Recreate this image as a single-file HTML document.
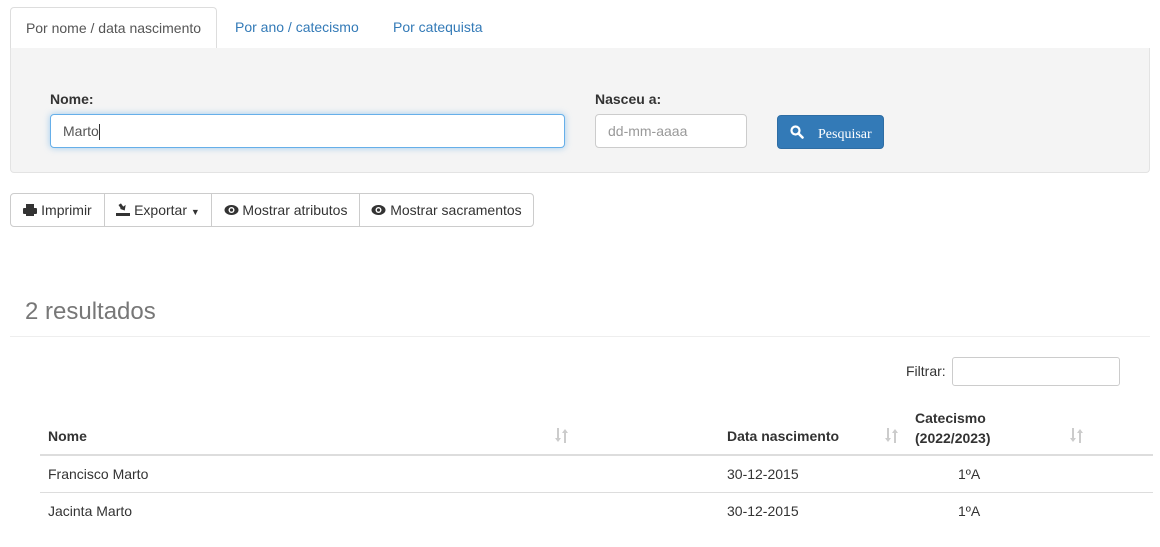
<!DOCTYPE html>
<html><head><meta charset="utf-8"><style>
*{box-sizing:border-box}
body{margin:0;width:1160px;height:547px;background:#fff;font-family:"Liberation Sans",Arial,sans-serif;font-size:14px;color:#333;position:relative;overflow:hidden}
.a{position:absolute}
.tab{position:absolute;top:7px;height:42px;line-height:41px;font-size:14px;color:#337ab7}
.btn{position:absolute;top:193px;height:34px;border:1px solid #ccc;background:#fff;line-height:32px;text-align:center;font-size:14px;color:#333}
</style></head><body>
<div class="a" style="left:10px;top:48px;width:1140px;height:1px;background:#ddd"></div>
<div class="tab" style="left:10px;width:207px;border:1px solid #ddd;border-bottom-color:#fff;border-radius:4px 4px 0 0;background:#fff;color:#555;text-align:center">Por nome / data nascimento</div>
<div class="tab" style="left:235px">Por ano / catecismo</div>
<div class="tab" style="left:393px">Por catequista</div>
<div class="a" style="left:10px;top:48px;width:1140px;height:125px;background:#f4f4f4;border:1px solid #e3e3e3;border-top:none;border-radius:0 0 4px 4px"></div>
<div class="a" style="left:50px;top:91px;font-weight:bold">Nome:</div>
<div class="a" style="left:50px;top:114px;width:515px;height:34px;background:#fff;border:1px solid #66afe9;border-radius:4px;box-shadow:0 0 7px rgba(102,175,233,.6);padding-left:12px;line-height:32px;color:#555">Marto<span style="border-left:1px solid #333;height:16px;display:inline-block;vertical-align:middle"></span></div>
<div class="a" style="left:595px;top:91px;font-weight:bold">Nasceu a:</div>
<div class="a" style="left:595px;top:114px;width:152px;height:34px;background:#fff;border:1px solid #ccc;border-radius:4px;padding-left:12px;line-height:32px;color:#999">dd-mm-aaaa</div>
<div class="a" style="left:777px;top:115px;width:107px;height:34px;background:#337ab7;border:1px solid #2e6da4;border-radius:4px;color:#fff;line-height:32px">
<svg class="a" style="left:12px;top:9px" width="14" height="14" viewBox="0 0 14 14"><circle cx="5.5" cy="5.5" r="4" fill="none" stroke="#fff" stroke-width="2.2"/><path d="M8.5 8.5L12.5 12.5" stroke="#fff" stroke-width="2.6" stroke-linecap="round"/></svg>
<span class="a" style="left:40px;top:3px;font-family:'Liberation Serif',serif;font-size:14px">Pesquisar</span></div>
<div class="btn" style="left:10px;width:95px;border-radius:4px 0 0 4px">
<svg style="vertical-align:-1px" width="14" height="12" viewBox="0 0 14 12"><rect x="3" y="0" width="8" height="4" fill="#333"/><rect x="0" y="4" width="14" height="6" rx="1" fill="#333"/><rect x="3" y="8" width="8" height="4" fill="#333"/></svg> Imprimir</div>
<div class="btn" style="left:104px;width:108px">
<svg style="vertical-align:-1px" width="14" height="13" viewBox="0 0 14 13"><path d="M5 0h3v4h3L7 8 4 4h1z" fill="#333" transform="rotate(-35 7 5)"/><rect x="0" y="10" width="14" height="3" fill="#333"/></svg> Exportar <span style="font-size:9px">▼</span></div>
<div class="btn" style="left:211px;width:149px">
<svg style="vertical-align:-1px" width="15" height="12" viewBox="0 0 15 12"><ellipse cx="7.5" cy="6" rx="7" ry="5" fill="#333"/><circle cx="7.5" cy="6" r="3" fill="#fff"/><circle cx="7.5" cy="6" r="1.6" fill="#333"/></svg> Mostrar atributos</div>
<div class="btn" style="left:359px;width:175px;border-radius:0 4px 4px 0">
<svg style="vertical-align:-1px" width="15" height="12" viewBox="0 0 15 12"><ellipse cx="7.5" cy="6" rx="7" ry="5" fill="#333"/><circle cx="7.5" cy="6" r="3" fill="#fff"/><circle cx="7.5" cy="6" r="1.6" fill="#333"/></svg> Mostrar sacramentos</div>
<div class="a" style="left:25px;top:298px;font-size:24px;color:#777">2 resultados</div>
<div class="a" style="left:10px;top:336px;width:1140px;height:1px;background:#eee"></div>
<div class="a" style="left:906px;top:363px;color:#333">Filtrar:</div>
<div class="a" style="left:952px;top:357px;width:168px;height:29px;border:1px solid #ccc;border-radius:3px;background:#fff"></div>
<div class="a" style="left:48px;top:428px;font-weight:bold">Nome</div>
<div class="a" style="left:727px;top:428px;font-weight:bold">Data nascimento</div>
<div class="a" style="left:915px;top:408px;font-weight:bold;line-height:20px">Catecismo<br>(2022/2023)</div>
<svg class="a" style="left:555px;top:428px" width="14" height="15" viewBox="0 0 14 15"><g fill="#ccc"><rect x="2" y="0" width="2" height="11"/><path d="M0 10h6L3 14z"/><rect x="9" y="4" width="2" height="11"/><path d="M7 5h6L10 1z"/></g></svg>
<svg class="a" style="left:885px;top:428px" width="14" height="15" viewBox="0 0 14 15"><g fill="#ccc"><rect x="2" y="0" width="2" height="11"/><path d="M0 10h6L3 14z"/><rect x="9" y="4" width="2" height="11"/><path d="M7 5h6L10 1z"/></g></svg>
<svg class="a" style="left:1070px;top:428px" width="14" height="15" viewBox="0 0 14 15"><g fill="#ccc"><rect x="2" y="0" width="2" height="11"/><path d="M0 10h6L3 14z"/><rect x="9" y="4" width="2" height="11"/><path d="M7 5h6L10 1z"/></g></svg>
<div class="a" style="left:40px;top:454px;width:1113px;height:2px;background:#ddd"></div>
<div class="a" style="left:48px;top:466px">Francisco Marto</div>
<div class="a" style="left:727px;top:466px">30-12-2015</div>
<div class="a" style="left:958px;top:466px">1ºA</div>
<div class="a" style="left:40px;top:492px;width:1113px;height:1px;background:#ddd"></div>
<div class="a" style="left:48px;top:503px">Jacinta Marto</div>
<div class="a" style="left:727px;top:503px">30-12-2015</div>
<div class="a" style="left:958px;top:503px">1ºA</div>
</body></html>
